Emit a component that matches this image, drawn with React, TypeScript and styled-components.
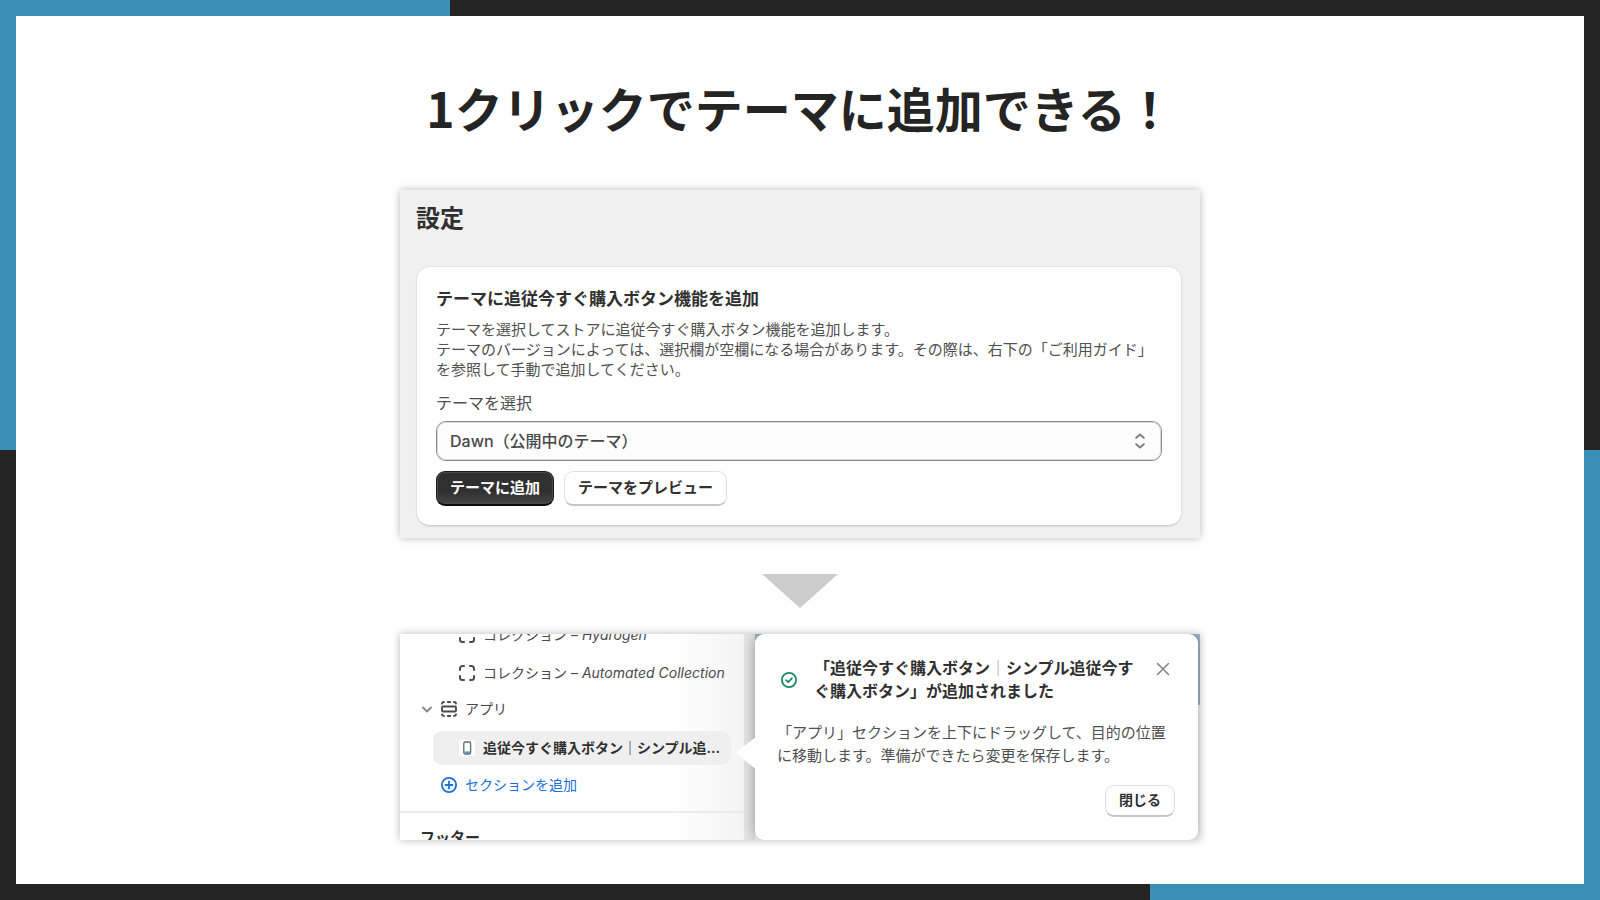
import React from "react";
import styled, { createGlobalStyle } from "styled-components";

const GlobalStyle = createGlobalStyle`
  *, *::before, *::after { box-sizing: border-box; }
  body {
    margin: 0;
    color: #303030;
    font-family: Inter, "Noto Sans CJK JP", sans-serif;
  }
  h1, h2, h3, p, ul { margin: 0; padding: 0; }
  ul { list-style: none; }
  button, select { font-family: inherit; color: inherit; }
`;

const Frame = styled.div`
  display: flex;
  min-height: 100vh;
  padding: 16px;
  background:
    linear-gradient(#3a8fb7, #3a8fb7) left top / 50vh 50vh no-repeat,
    linear-gradient(#3a8fb7, #3a8fb7) right bottom / 50vh 50vh no-repeat,
    #242424;
`;

const Slide = styled.main`
  flex: 1;
  display: flex;
  flex-direction: column;
  align-items: center;
  padding: 55px 24px 40px;
  background: #fff;
`;

const Title = styled.h1`
  margin-bottom: 47px;
  color: #242424;
  font-family: "Noto Sans CJK JP", sans-serif;
  font-size: 48px;
  font-weight: 700;
  line-height: 72px;
`;

const Panel = styled.section`
  width: 100%;
  max-width: 800px;
  box-shadow: 0 0 8px rgba(0, 0, 0, 0.28);
`;

const SettingsPanel = styled(Panel)`
  padding: 11px 18px 12px 16px;
  background: #f0f0f0;
`;

const PanelTitle = styled.h2`
  margin-bottom: 29px;
  font-size: 24px;
  font-weight: 600;
  line-height: 36px;
`;

const Card = styled.div`
  padding: 20px 19px 19px;
  border: 1px solid #e3e3e3;
  border-bottom-color: #d0d0d0;
  border-radius: 14px;
  background: #fff;
  box-shadow: 0 1px 1px rgba(0, 0, 0, 0.08);
`;

const CardTitle = styled.h3`
  margin-bottom: 9px;
  font-size: 17px;
  font-weight: 600;
  line-height: 24px;
`;

const Description = styled.p`
  margin-bottom: 11px;
  color: #505050;
  font-size: 15px;
  line-height: 20px;
`;

const FieldLabel = styled.label`
  display: block;
  margin-bottom: 6px;
  color: #505050;
  font-size: 16px;
  line-height: 24px;
`;

const SelectField = styled.div`
  display: grid;
  align-items: center;
  margin-bottom: 10px;
  & > * { grid-area: 1 / 1; }
  & > svg {
    justify-self: end;
    margin-right: 16px;
    pointer-events: none;
  }
`;

const ThemeSelect = styled.select`
  width: 100%;
  height: 40px;
  padding: 0 40px 0 13px;
  border: 1px solid #8a8a8a;
  border-radius: 10px;
  outline: 1px solid #d8d8d8;
  outline-offset: -2px;
  background: #fdfdfd;
  color: #484848;
  font-size: 16px;
  font-weight: 500;
  appearance: none;
`;

const ButtonRow = styled.div`
  display: flex;
  gap: 10px;
`;

const Button = styled.button<{ $primary?: boolean }>`
  height: 35px;
  padding: 0 13px 3px;
  border: 1px solid ${(p) => (p.$primary ? "#1a1a1a" : "#dedede")};
  border-bottom: 2px solid ${(p) => (p.$primary ? "#0c0c0c" : "#c6c6c6")};
  border-radius: 9px;
  background: ${(p) => (p.$primary ? "linear-gradient(#303030 60%, #464646)" : "#fff")};
  box-shadow: ${(p) => (p.$primary ? "inset 0 0 0 1px #4a4a4a" : "none")};
  color: ${(p) => (p.$primary ? "#fff" : "#303030")};
  font-size: 15px;
  font-weight: 600;
  white-space: nowrap;
`;

const SmallButton = styled(Button)`
  height: 32px;
  font-size: 14px;
`;

const DownArrow = styled.svg`
  display: block;
  margin: 36px 0 26px;
`;

const EditorPanel = styled(Panel)`
  display: flex;
  height: 206px;
  overflow: hidden;
  background:
    linear-gradient(#a0b4cc 71px, #f5f5f5 71px) right / calc(100% - 355px) no-repeat,
    #e4e4e4;
`;

const Sidebar = styled.nav`
  flex: 0 0 344px;
  overflow: hidden;
  background: linear-gradient(to right, #fff 78%, #f4f4f4);
`;

const Tree = styled.ul`
  margin-top: -18px;
  padding-bottom: 8px;
  border-bottom: 2px solid #ebebeb;
`;

const TreeRow = styled.li<{ $indent: number; $height: number }>`
  display: flex;
  align-items: center;
  gap: 8px;
  height: ${(p) => p.$height}px;
  padding-left: ${(p) => p.$indent}px;
  color: #4a4a4a;
  font-size: 14px;
  line-height: 20px;
  white-space: nowrap;
  & > svg { flex: none; }
`;

const SelectedRow = styled(TreeRow)`
  margin: 6px 13px 2px 33px;
  border-radius: 9px;
  background: #efefef;
  color: #303030;
  font-weight: 600;
`;

const AddLink = styled.a`
  display: flex;
  align-items: center;
  gap: 8px;
  color: #1a6fe0;
  text-decoration: none;
`;

const FooterHeading = styled.h3`
  padding: 14px 0 0 20px;
  font-size: 15px;
  font-weight: 600;
  line-height: 22px;
`;

const Popover = styled.div`
  position: relative;
  flex: 1;
  display: flex;
  flex-direction: column;
  margin: 0 2px 0 11px;
  padding: 23px 23px 23px 22px;
  border-radius: 9px;
  background: #fff;
  box-shadow: 0 0 14px rgba(0, 0, 0, 0.35);
`;

const Pointer = styled.svg`
  position: absolute;
  left: -19px;
  top: 103px;
`;

const PopoverHeader = styled.div`
  display: flex;
  margin-bottom: 18px;
  padding-left: 4px;
`;

const StatusIcon = styled.svg`
  flex: none;
  align-self: center;
  margin-right: 17px;
`;

const PopoverTitle = styled.h3`
  flex: 1;
  font-size: 16px;
  font-weight: 600;
  line-height: 23px;
`;

const Divider = styled.span`
  color: #999;
  font-weight: 400;
`;

const CloseButton = styled.button`
  display: flex;
  align-self: flex-start;
  margin: 4px 4px 0 6px;
  padding: 0;
  border: 0;
  background: none;
`;

const PopoverText = styled.p`
  margin-bottom: 18px;
  color: #505050;
  font-size: 15px;
  line-height: 23px;
  white-space: nowrap;
`;

const PopoverActions = styled.div`
  display: flex;
  justify-content: flex-end;
`;

const BlockIcon = () => (
  <svg width="16" height="16" viewBox="0 0 16 16" fill="none" stroke="#4a4a4a" strokeWidth="2" strokeLinecap="round" aria-hidden="true">
    <path d="M1 5V3.500A2.500 2.500 0 0 1 3.500 1H5M11 1h1.500A2.500 2.500 0 0 1 15 3.500V5M15 11v1.500a2.500 2.500 0 0 1-2.500 2.500H11M5 15H3.500A2.500 2.500 0 0 1 1 12.500V11" />
  </svg>
);

const SectionIcon = () => (
  <svg width="16" height="16" viewBox="0 0 16 16" fill="none" stroke="#4a4a4a" strokeWidth="1.900" strokeLinecap="round" aria-hidden="true">
    <rect x="1" y="5.500" width="14" height="5" rx="1" />
    <path d="M1 2.600Q1.200 1 3 1M6.800 1h2.400M13 1q1.800 0 2 1.600M1 13.400Q1.200 15 3 15M6.800 15h2.400M13 15q1.800 0 2-1.600" />
  </svg>
);

const AppIcon = () => (
  <svg width="16" height="16" viewBox="0 0 16 16" aria-hidden="true">
    <rect width="16" height="16" rx="2" fill="#fff" />
    <rect x="4.800" y="2" width="6.800" height="12" rx="1.400" fill="#fff" stroke="#666" strokeWidth="1.300" />
    <path d="M5.600 12.300h5.200" stroke="#3a9bd0" strokeWidth="1.800" />
  </svg>
);

const PlusIcon = () => (
  <svg width="16" height="16" viewBox="0 0 16 16" fill="none" stroke="#1a6fe0" strokeWidth="1.800" strokeLinecap="round" aria-hidden="true">
    <circle cx="8" cy="8" r="7.100" />
    <path d="M8 4.500v7M4.500 8h7" />
  </svg>
);

const ChevronIcon = () => (
  <svg width="12" height="12" viewBox="0 0 12 12" fill="none" stroke="#8a8a8a" strokeWidth="1.900" strokeLinecap="round" strokeLinejoin="round" aria-hidden="true">
    <path d="M2 4.500l4 4 4-4" />
  </svg>
);

export default function App() {
  return (
    <>
      <GlobalStyle />
      <Frame>
        <Slide lang="ja">
          <Title>1クリックでテーマに追加できる！</Title>

          <SettingsPanel>
            <PanelTitle>設定</PanelTitle>
            <Card>
              <CardTitle>テーマに追従今すぐ購入ボタン機能を追加</CardTitle>
              <Description>
                テーマを選択してストアに追従今すぐ購入ボタン機能を追加します。
                <br />
                テーマのバージョンによっては、選択欄が空欄になる場合があります。その際は、右下の「ご利用ガイド」を参照して手動で追加してください。
              </Description>
              <FieldLabel htmlFor="theme">テーマを選択</FieldLabel>
              <SelectField>
                <ThemeSelect id="theme" defaultValue="dawn">
                  <option value="dawn">Dawn（公開中のテーマ）</option>
                </ThemeSelect>
                <svg width="12" height="16" viewBox="0 0 12 16" fill="none" stroke="#808080" strokeWidth="2" strokeLinecap="round" strokeLinejoin="round" aria-hidden="true">
                  <path d="M2.200 4.800L6 1.500l3.800 3.300M2.200 11.200L6 14.500l3.800-3.300" />
                </svg>
              </SelectField>
              <ButtonRow>
                <Button type="button" $primary>テーマに追加</Button>
                <Button type="button">テーマをプレビュー</Button>
              </ButtonRow>
            </Card>
          </SettingsPanel>

          <DownArrow width="76" height="34" viewBox="0 0 76 34" aria-hidden="true">
            <path d="M0 0h76L38 34z" fill="#ccc" />
          </DownArrow>

          <EditorPanel>
            <Sidebar>
              <Tree>
                <TreeRow $indent={59} $height={38}>
                  <BlockIcon />
                  <span>コレクション – <em>Hydrogen</em></span>
                </TreeRow>
                <TreeRow $indent={59} $height={38}>
                  <BlockIcon />
                  <span>コレクション – <em>Automated Collection</em></span>
                </TreeRow>
                <TreeRow $indent={21} $height={33}>
                  <ChevronIcon />
                  <SectionIcon />
                  <span>アプリ</span>
                </TreeRow>
                <SelectedRow $indent={26} $height={34}>
                  <AppIcon />
                  <span>追従今すぐ購入ボタン｜シンプル追...</span>
                </SelectedRow>
                <TreeRow $indent={41} $height={36}>
                  <AddLink href="#add-section">
                    <PlusIcon />
                    セクションを追加
                  </AddLink>
                </TreeRow>
              </Tree>
              <FooterHeading>フッター</FooterHeading>
            </Sidebar>

            <Popover role="dialog" aria-labelledby="added-title">
              <Pointer width="20" height="32" viewBox="0 0 20 32" aria-hidden="true">
                <path d="M20 0L1 14.500q-1.500 1.500 0 3L20 32z" fill="#fff" />
              </Pointer>
              <PopoverHeader>
                <StatusIcon width="16" height="16" viewBox="0 0 16 16" fill="none" stroke="#158a62" strokeWidth="1.800" strokeLinecap="round" strokeLinejoin="round" aria-hidden="true">
                  <circle cx="8" cy="8" r="7.100" />
                  <path d="M5.300 8.300l2 1.900 3.500-3.900" />
                </StatusIcon>
                <PopoverTitle id="added-title">
                  「追従今すぐ購入ボタン<Divider>｜</Divider>シンプル追従今すぐ購入ボタン」が追加されました
                </PopoverTitle>
                <CloseButton type="button" aria-label="閉じる">
                  <svg width="16" height="16" viewBox="0 0 16 16" fill="none" stroke="#858585" strokeWidth="1.600" strokeLinecap="round" aria-hidden="true">
                    <path d="M2.500 2.500l11 11M13.500 2.500l-11 11" />
                  </svg>
                </CloseButton>
              </PopoverHeader>
              <PopoverText>
                「アプリ」セクションを上下にドラッグして、目的の位置
                <br />
                に移動します。準備ができたら変更を保存します。
              </PopoverText>
              <PopoverActions>
                <SmallButton type="button">閉じる</SmallButton>
              </PopoverActions>
            </Popover>
          </EditorPanel>
        </Slide>
      </Frame>
    </>
  );
}
